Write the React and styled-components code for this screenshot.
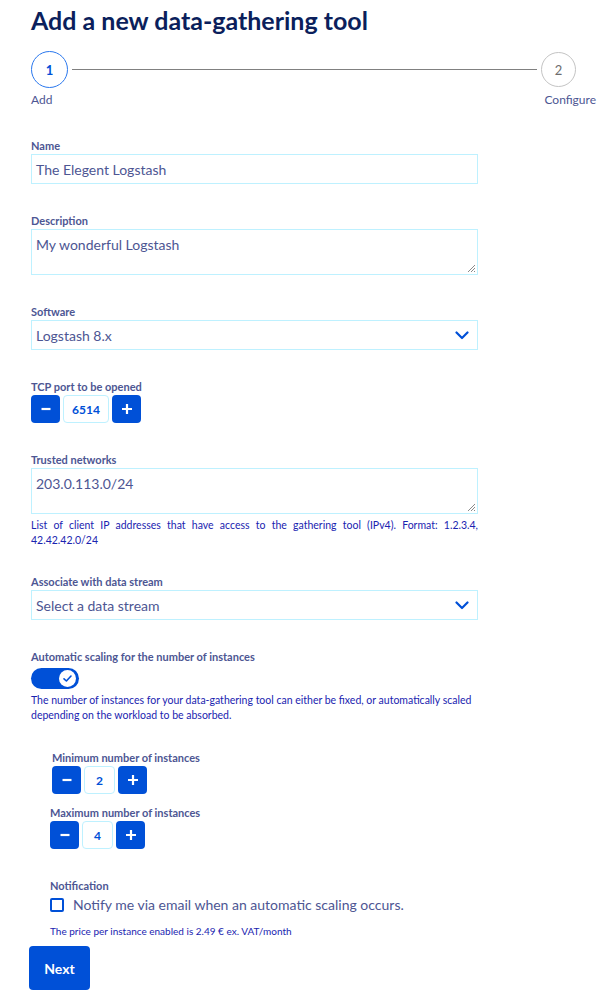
import { createGlobalStyle } from "styled-components";
import styled from "styled-components";

const GlobalStyle = createGlobalStyle`
  body {
    margin: 0;
    background: #fff;
    font-family: "Lato", "Noto Sans", sans-serif;
    color: #4d5693;
  }
  * { box-sizing: border-box; }
`;

const Page = styled.div`
  width: 604px;
  padding: 2px 8px 10px 31px;
`;

const Title = styled.h1`
  margin: 0;
  font-size: 25px;
  line-height: 36px;
  font-weight: 700;
  color: #0b1f5c;
`;

const Stepper = styled.div`
  margin-top: 13px;
  margin-right: 20px;
  display: flex;
  align-items: center;
`;

const StepCircle = styled.div`
  width: ${({ active }) => (active ? 37 : 35)}px;
  height: ${({ active }) => (active ? 37 : 35)}px;
  flex: none;
  border-radius: 50%;
  border: 1px solid ${({ active }) => (active ? "#2a78ee" : "#c4c4c4")};
  color: ${({ active }) => (active ? "#0050d7" : "#6d6d6d")};
  display: flex;
  align-items: center;
  justify-content: center;
  font-size: 13px;
  font-weight: ${({ active }) => (active ? 700 : 400)};
`;

const StepLine = styled.div`
  flex: 1;
  height: 1px;
  background: #808080;
  margin: 0 4px;
`;

const StepLabels = styled.div`
  display: flex;
  justify-content: space-between;
  font-size: 12px;
  margin-top: 4px;
  color: #4d5693;
`;

const Form = styled.div`
  width: 447px;
  margin-top: 32px;
  display: flex;
  flex-direction: column;
`;

const Field = styled.div`
  display: flex;
  flex-direction: column;
  margin-top: ${({ gap }) => gap ?? 30}px;
  margin-left: ${({ indent }) => indent ?? 0}px;
  &:first-child { margin-top: 0; }
`;

const Label = styled.label`
  font-size: 11px;
  line-height: 14px;
  font-weight: 700;
  color: #4d5693;
  margin-bottom: 1px;
`;

const TextInput = styled.div`
  height: 30px;
  border: 1px solid #bef1ff;
  padding: 0 4px;
  display: flex;
  align-items: center;
  font-size: 14px;
  color: #4d5693;
`;

const TextArea = styled.div`
  position: relative;
  height: 46px;
  border: 1px solid #bef1ff;
  padding: 5px 4px;
  font-size: 14px;
  line-height: 20px;
  color: #4d5693;
`;

const Grip = styled.svg`
  position: absolute;
  right: 1px;
  bottom: 1px;
`;

const Select = styled.div`
  height: 30px;
  border: 1px solid #bef1ff;
  padding: 0 8px 0 4px;
  display: flex;
  align-items: center;
  justify-content: space-between;
  font-size: 14px;
  color: #4d5693;
`;

const Counter = styled.div`
  display: flex;
  gap: 3px;
  height: 28px;
`;

const CountButton = styled.button`
  width: 29px;
  height: 28px;
  border: none;
  border-radius: 4px;
  background: #0050d7;
  padding: 0;
  display: flex;
  align-items: center;
  justify-content: center;
`;

const CountValue = styled.div`
  width: ${({ w }) => w}px;
  border: 1px solid #bef1ff;
  border-radius: 4px;
  display: flex;
  align-items: center;
  justify-content: center;
  font-size: 12px;
  font-weight: 700;
  color: #0050d7;
`;

const Help = styled.p`
  margin: 4px 0 0;
  font-size: 10.5px;
  line-height: 15px;
  color: #1a24b0;
  text-align: ${({ justify }) => (justify ? "justify" : "left")};
`;

const Toggle = styled.div`
  margin-top: 3px;
  width: 48px;
  height: 21px;
  border-radius: 11px;
  background: #0050d7;
  display: flex;
  align-items: center;
  justify-content: flex-end;
  padding-right: 3px;
`;

const Knob = styled.div`
  width: 17px;
  height: 17px;
  border-radius: 50%;
  background: #fff;
  display: flex;
  align-items: center;
  justify-content: center;
`;

const Group = styled.div`
  display: flex;
  flex-direction: column;
`;

const CheckRow = styled.label`
  display: flex;
  align-items: center;
  gap: 9px;
  margin-top: 2px;
  font-size: 14px;
  color: #4d5693;
`;

const Box = styled.span`
  width: 14px;
  height: 14px;
  border: 2px solid #0050d7;
  border-radius: 2px;
  flex: none;
`;

const Price = styled.p`
  margin: 12px 0 0;
  font-size: 10px;
  color: #1a24b0;
`;

const NextButton = styled.button`
  margin-top: 9px;
  margin-left: -2px;
  align-self: flex-start;
  width: 61px;
  height: 44px;
  flex: none;
  border: none;
  border-radius: 4px;
  background: #0050d7;
  color: #fff;
  font-family: inherit;
  font-size: 14px;
  font-weight: 700;
`;

const Chevron = () => (
  <svg width="14" height="9" viewBox="0 0 14 9">
    <path d="M1.5 1.5 L7 7 L12.5 1.5" fill="none" stroke="#0050d7" strokeWidth="2.2" strokeLinecap="round" strokeLinejoin="round" />
  </svg>
);

const ResizeGrip = () => (
  <Grip width="10" height="10" viewBox="0 0 10 10">
    <path d="M9 2 L2 9 M9 5 L5 9 M9 8 L8 9" stroke="#8a8a8a" strokeWidth="1" />
  </Grip>
);

const Minus = () => (
  <svg width="12" height="12" viewBox="0 0 12 12">
    <path d="M1.5 6 H10.5" stroke="#fff" strokeWidth="2.2" />
  </svg>
);

const Plus = () => (
  <svg width="12" height="12" viewBox="0 0 12 12">
    <path d="M1 6 H11 M6 1 V11" stroke="#fff" strokeWidth="2.2" />
  </svg>
);

const NumberInput = ({ value, w }) => (
  <Counter>
    <CountButton aria-label="decrease"><Minus /></CountButton>
    <CountValue w={w}>{value}</CountValue>
    <CountButton aria-label="increase"><Plus /></CountButton>
  </Counter>
);

export default function App() {
  return (
    <>
      <GlobalStyle />
      <Page>
        <Title>Add a new data-gathering tool</Title>
        <Stepper>
          <StepCircle active>1</StepCircle>
          <StepLine />
          <StepCircle>2</StepCircle>
        </Stepper>
        <StepLabels>
          <span>Add</span>
          <span>Configure</span>
        </StepLabels>

        <Form>
          <Field>
            <Label>Name</Label>
            <TextInput>The Elegent Logstash</TextInput>
          </Field>
          <Field>
            <Label>Description</Label>
            <TextArea>
              My wonderful Logstash
              <ResizeGrip />
            </TextArea>
          </Field>
          <Field>
            <Label>Software</Label>
            <Select>
              <span>Logstash 8.x</span>
              <Chevron />
            </Select>
          </Field>
          <Field>
            <Label>TCP port to be opened</Label>
            <NumberInput value="6514" w={46} />
          </Field>
          <Field>
            <Label>Trusted networks</Label>
            <TextArea>
              203.0.113.0/24
              <ResizeGrip />
            </TextArea>
            <Help justify>
              List of client IP addresses that have access to the gathering tool (IPv4). Format: 1.2.3.4, 42.42.42.0/24
            </Help>
          </Field>
          <Field gap={27}>
            <Label>Associate with data stream</Label>
            <Select>
              <span>Select a data stream</span>
              <Chevron />
            </Select>
          </Field>
          <Field>
            <Label>Automatic scaling for the number of instances</Label>
            <Toggle>
              <Knob>
                <svg width="11" height="11" viewBox="0 0 11 11">
                  <path d="M2 5.8 L4.4 8 L9 3" fill="none" stroke="#0050d7" strokeWidth="1.6" strokeLinecap="round" strokeLinejoin="round" />
                </svg>
              </Knob>
            </Toggle>
            <Help>
              The number of instances for your data-gathering tool can either be fixed, or automatically scaled depending on the workload to be absorbed.
            </Help>
          </Field>
          <Field gap={28} indent={21}>
            <Label>Minimum number of instances</Label>
            <NumberInput value="2" w={31} />
          </Field>
          <Field gap={12} indent={19}>
            <Label>Maximum number of instances</Label>
            <NumberInput value="4" w={31} />
          </Field>
          <Field indent={19}>
            <Group>
              <Label>Notification</Label>
              <CheckRow>
                <Box />
                Notify me via email when an automatic scaling occurs.
              </CheckRow>
              <Price>The price per instance enabled is 2.49 € ex. VAT/month</Price>
            </Group>
          </Field>
          <NextButton>Next</NextButton>
        </Form>
      </Page>
    </>
  );
}
